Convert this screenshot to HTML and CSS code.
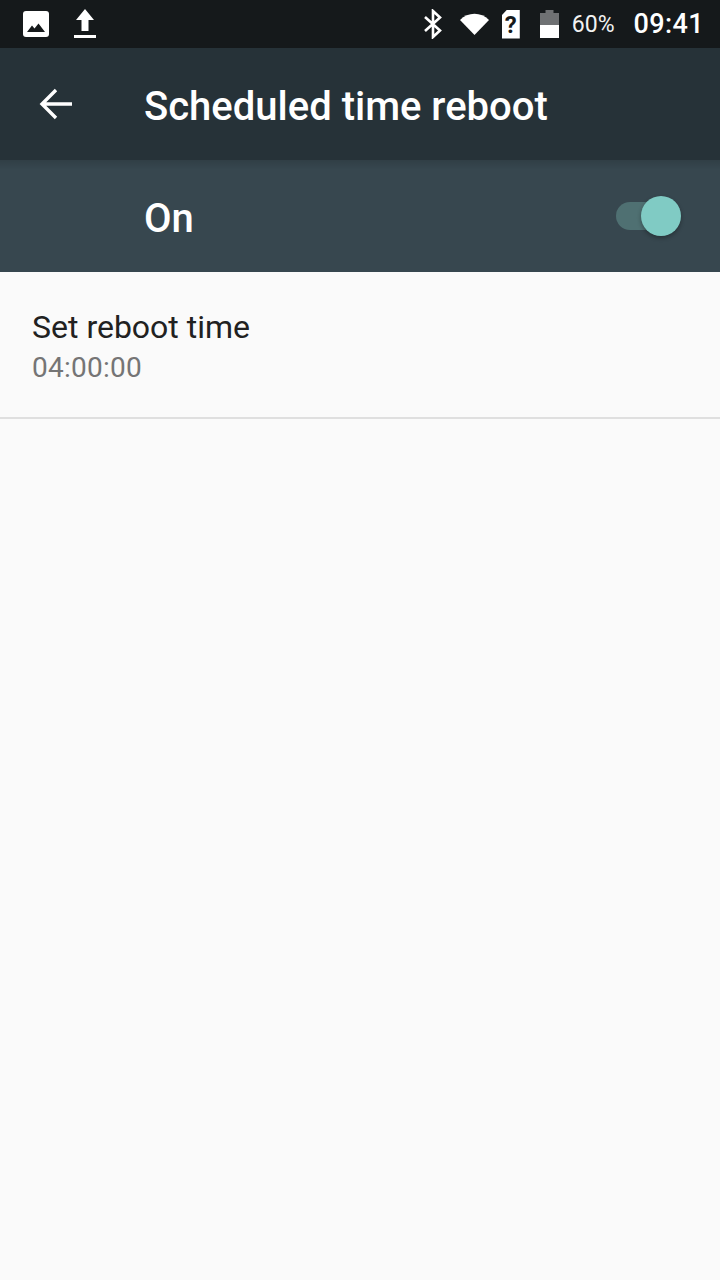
FILE: index.html
```html
<!DOCTYPE html>
<html lang="en">
<head>
  <meta charset="UTF-8">
  <meta name="viewport" content="width=device-width, initial-scale=1.0">
  <title>Scheduled time reboot</title>
  <link rel="stylesheet" href="styles.css">
</head>
<body>
  <div class="statusbar">
    <div class="status-left">
      <svg class="ic-image" width="26" height="26" viewBox="0 0 26 26">
        <rect width="26" height="26" rx="3" fill="#fff"/>
        <path d="M4 21 L9 14.5 L11.5 17.5 L15.5 12.5 L22 21 Z" fill="#15191b"/>
      </svg>
      <svg class="ic-upload" width="24" height="30" viewBox="0 0 24 30">
        <path d="M12 0 L21 11 H15.5 V22 H8.5 V11 H3 Z" fill="#fff"/>
        <rect x="1" y="26" width="22" height="3" fill="#fff"/>
      </svg>
    </div>
    <div class="status-right">
      <svg class="ic-bt" width="20" height="30" viewBox="0 0 20 30">
        <path d="M2 8 L17 21.5 L10 28 V2 L17 8.5 L2 22" fill="none" stroke="#fff" stroke-width="2.6"/>
      </svg>
      <svg class="ic-wifi" width="29" height="22" viewBox="0 0 30 22" preserveAspectRatio="none">
        <path d="M0 7 C8 -1.5 22 -1.5 30 7 L15 22 Z" fill="#fff"/>
      </svg>
      <div class="sim">?</div>
      <svg class="ic-battery" width="19" height="28" viewBox="0 0 19 28">
        <path d="M5.5 0 H13.5 V3 H19 V15 H0 V3 H5.5 Z" fill="#6f7173"/>
        <rect y="15" width="19" height="13" fill="#fff"/>
      </svg>
      <span class="percent">60%</span>
      <span class="clock">09:41</span>
    </div>
  </div>

  <div class="toolbar">
    <div class="back">
      <svg width="34" height="32" viewBox="0 0 34 32">
        <path d="M33 16 H3 M17 2 L3 16 L17 30" fill="none" stroke="#fff" stroke-width="3.4"/>
      </svg>
    </div>
    <h1 class="title">Scheduled time reboot</h1>
  </div>

  <div class="switchbar">
    <span class="switch-label">On</span>
    <div class="switch">
      <div class="switch-track"></div>
      <div class="switch-thumb"></div>
    </div>
  </div>

  <div class="pref">
    <div class="pref-title">Set reboot time</div>
    <div class="pref-summary">04:00:00</div>
  </div>
</body>
</html>
```

FILE: styles.css
```css
html, body {
  margin: 0;
  padding: 0;
}

body {
  width: 720px;
  height: 1280px;
  overflow: hidden;
  background-color: #fafafa;
  font-family: Roboto, "Liberation Sans", sans-serif;
}

/* status bar */
.statusbar {
  height: 48px;
  background-color: #15191b;
  display: flex;
  align-items: center;
  justify-content: space-between;
  color: #fff;
}

.status-left {
  display: flex;
  align-items: center;
  gap: 24px;
  padding-left: 23px;
}

.status-right {
  display: flex;
  align-items: center;
  padding-right: 16px;
}

.status-right svg {
  display: block;
}

.ic-bt {
  margin-right: 17px;
}

.ic-wifi {
  margin-right: 13px;
}

.sim {
  width: 18px;
  height: 29px;
  background-color: #fff;
  color: #15191b;
  font-size: 24px;
  font-weight: 700;
  line-height: 31px;
  text-align: center;
  clip-path: polygon(30% 0, 100% 0, 100% 100%, 0 100%, 0 20%);
  margin-right: 20px;
}

.ic-battery {
  margin-right: 13px;
}

.percent {
  font-size: 23px;
  margin-right: 19px;
  color: #f2f2f2;
}

.clock {
  font-size: 27px;
  font-weight: 500;
  letter-spacing: 0.4px;
}

/* toolbar */
.toolbar {
  height: 112px;
  background-color: #263238;
  display: flex;
  align-items: center;
}

.back {
  width: 144px;
  padding-left: 39px;
  box-sizing: border-box;
  display: flex;
}

.title {
  margin: 0;
  padding-top: 4px;
  font-size: 40px;
  font-weight: 500;
  color: #fff;
}

/* on/off bar, toolbar shadow falls on its top edge */
.switchbar {
  height: 112px;
  background: linear-gradient(rgba(0, 0, 0, 0.12), rgba(0, 0, 0, 0) 10px), #37474f;
  display: flex;
  align-items: center;
  justify-content: space-between;
  padding-left: 144px;
  padding-right: 39px;
}

.switch-label {
  padding-top: 4px;
  font-size: 40px;
  font-weight: 500;
  color: #fff;
}

.switch {
  position: relative;
  width: 66px;
  height: 40px;
  margin-top: -1px;
}

.switch-track {
  position: absolute;
  left: 1px;
  top: 6px;
  width: 60px;
  height: 28px;
  border-radius: 14px;
  background-color: #4f7072;
}

.switch-thumb {
  position: absolute;
  right: 0;
  top: 0;
  width: 40px;
  height: 40px;
  border-radius: 50%;
  background-color: #80cbc4;
  box-shadow: 0 2px 4px rgba(0, 0, 0, 0.3);
}

/* preference row */
.pref {
  height: 147px;
  box-sizing: border-box;
  padding: 36px 32px 0;
  border-bottom: 2px solid #dfdfdf;
}

.pref-title {
  font-size: 32px;
  line-height: 38px;
  color: #212121;
}

.pref-summary {
  font-size: 28px;
  line-height: 44px;
  letter-spacing: 0.25px;
  color: #757575;
}
```
